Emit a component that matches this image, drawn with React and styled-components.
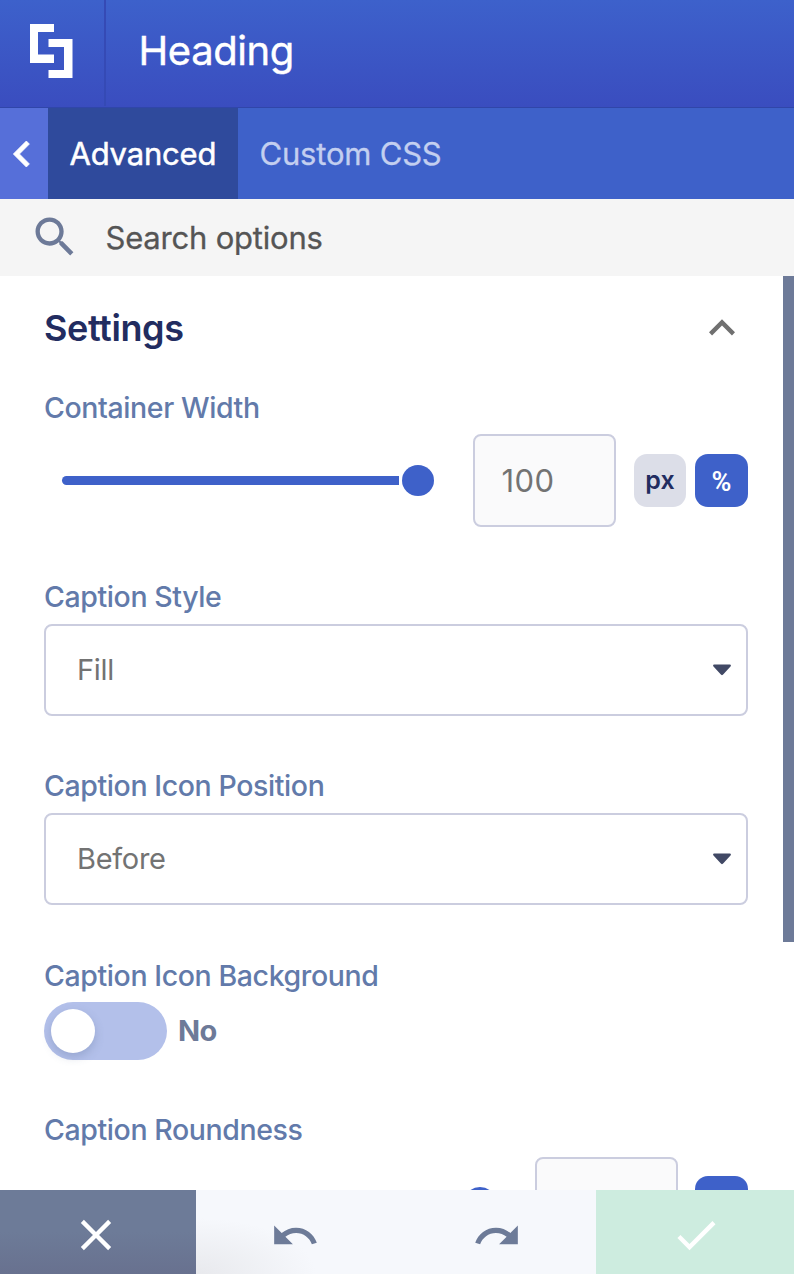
import React from "react";
import styled, { createGlobalStyle } from "styled-components";

const GlobalStyle = createGlobalStyle`
  * { box-sizing: border-box; }
  body { margin: 0; background: #fff; }
  button, input { font: inherit; letter-spacing: inherit; border: 0; padding: 0; margin: 0; }
`;

const Panel = styled.div`
  width: 794px;
  height: 1274px;
  display: flex;
  flex-direction: column;
  overflow: hidden;
  background: #fff;
  font-family: Inter, "Liberation Sans", sans-serif;
`;

const Header = styled.header`
  height: 108px;
  flex: none;
  display: flex;
  background: linear-gradient(#3d61cb, #3a4dbf);
  border-bottom: 1px solid #3046a9;
`;

const LogoCell = styled.div`
  width: 106px;
  height: 106px;
  padding: 24px 0 0 30px;
  border-right: 2px solid #354ab5;
`;

const Title = styled.h1`
  margin: 0;
  padding: 0 0 7px 32.500px;
  display: flex;
  align-items: center;
  color: #fff;
  font-size: 40px;
  font-weight: 400;
  letter-spacing: -0.4px;
  -webkit-text-stroke: 0.4px currentColor;
`;

const Tabs = styled.nav`
  height: 91px;
  flex: none;
  display: flex;
  background: #3e61c9;
`;

const BackButton = styled.button`
  width: 48px;
  display: flex;
  align-items: center;
  justify-content: center;
  padding: 0 5px 0 0;
  background: #566fd9;
  color: #fff;
`;

const Tab = styled.button`
  padding: 0 21.5px 1px;
  width: ${(p) => (p.$active ? "190px" : "auto")};
  text-align: left;
  background: ${(p) => (p.$active ? "#2f4a9c" : "transparent")};
  color: ${(p) => (p.$active ? "#fff" : "#c3cff0")};
  font-size: 31px;
  font-weight: 400;
  letter-spacing: -0.2px;
  -webkit-text-stroke: ${(p) => (p.$active ? "0.5px" : "0.3px")} currentColor;
  white-space: nowrap;
`;

const SearchBar = styled.div`
  height: 77px;
  flex: none;
  display: flex;
  align-items: center;
  gap: 24.5px;
  padding: 0 0 2px 29px;
  background: #f5f5f5;
  color: #6d7a98;
`;

const SearchInput = styled.input`
  flex: 1;
  padding-top: 2px;
  background: transparent;
  color: #555;
  font-size: 31px;
  font-weight: 400;
  letter-spacing: -0.2px;
  -webkit-text-stroke: 0.3px #555;
  &::placeholder { color: #555; opacity: 1; }
`;

const Body = styled.div`
  flex: 1;
  min-height: 0;
  display: flex;
  overflow: hidden;
`;

const Options = styled.main`
  flex: 1;
  padding: 0 35px 0 44px;
`;

const ScrollThumb = styled.div`
  width: 11px;
  height: 666px;
  background: #6d7a98;
`;

const SectionHeader = styled.div`
  height: 105px;
  padding-bottom: 1px;
  display: flex;
  justify-content: space-between;
  align-items: center;
  color: #707070;
`;

const SectionTitle = styled.h2`
  margin: 0;
  padding-bottom: 1px;
  color: #222c60;
  font-size: 36px;
  font-weight: 600;
  letter-spacing: -0.4px;
`;

const Field = styled.section`
  margin-bottom: 44px;
`;

const Label = styled.div`
  height: 53px;
  padding-top: ${(p) => (p.$low ? "1px" : "0")};
  line-height: 52px;
  color: #627aaa;
  font-size: 28.5px;
  font-weight: 500;
  letter-spacing: -0.4px;
  white-space: nowrap;
`;

const SliderRow = styled.div`
  height: 93px;
  display: flex;
  align-items: center;
`;

const Slider = styled.div`
  flex: 1;
  display: flex;
  align-items: center;
  margin: 0 39px ${(p) => (p.$single ? "2px" : "1px")} 18px;
`;

const Track = styled.div`
  flex: 1;
  height: 9px;
  border-radius: 5px 0 0 5px;
  background: #3e61c9;
`;

const Knob = styled.div`
  width: 32px;
  height: 31px;
  margin-left: 3px;
  border-radius: 50%;
  background: #3e61c9;
`;

const NumberInput = styled.input`
  width: 143px;
  height: 93px;
  margin-right: ${(p) => (p.$single ? "17px" : "18px")};
  padding-left: 26.5px;
  border: 2px solid #cbcddf;
  border-radius: 8px;
  background: #fafafb;
  color: #737373;
  font-size: 31px;
  letter-spacing: 0.4px;
`;

const Units = styled.div`
  display: flex;
  gap: 9px;
  margin-bottom: ${(p) => (p.$single ? "2px" : "0")};
`;

const Unit = styled.button`
  width: ${(p) => (p.$active ? "53px" : "52px")};
  height: 53px;
  padding: ${(p) => (p.$active ? "2px 0 0" : "0 0 1px")};
  border-radius: 13px;
  background: ${(p) => (p.$active ? "#3e61c9" : "#dcdee8")};
  color: ${(p) => (p.$active ? "#fff" : "#222c60")};
  font-family: ${(p) => (p.$active ? "Roboto, sans-serif" : "inherit")};
  font-size: ${(p) => (p.$active ? "27px" : "25px")};
  font-weight: 600;
`;

const Select = styled.div`
  height: 92px;
  display: flex;
  align-items: center;
  justify-content: space-between;
  padding: 0 0 1px 31px;
  border: 2px solid #cbcddf;
  border-radius: 8px;
  color: #737373;
  font-size: 29px;
  letter-spacing: -0.3px;
  svg { margin: 0 15px 0 0; }
`;

const ToggleRow = styled.div`
  display: flex;
  align-items: center;
  gap: 11px;
  color: #6d7a98;
  font-size: 29px;
  font-weight: 700;
  letter-spacing: -0.6px;
`;

const ToggleText = styled.span`
  padding-bottom: 2px;
`;

const Toggle = styled.div`
  width: 123px;
  height: 58px;
  padding: 7px;
  border-radius: 29px;
  background: #b3c0ea;
`;

const ToggleKnob = styled.div`
  width: 44px;
  height: 44px;
  border-radius: 50%;
  background: #fff;
  box-shadow: 0 4px 10px rgba(90, 110, 150, 0.3);
`;

const Footer = styled.footer`
  height: 84px;
  flex: none;
  display: grid;
  grid-template-columns: 196px 200px 200px 198px;
`;

const tones = {
  cancel: ["linear-gradient(#6d7b98 50%, #68718f)", "#fff", "5px 4px 0 0"],
  undo: ["radial-gradient(ellipse 120px 56px at 0 100%, #e8e9ed, #f6f8fc)", "#6d7b98", "7px 3px 0 0"],
  redo: ["#f6f8fc", "#6d7b98", "7px 0 0 2px"],
  save: ["#cdecdf", "#fff", "5px 0 0 1px"],
};

const Action = styled.button`
  display: flex;
  align-items: center;
  justify-content: center;
  padding: ${(p) => tones[p.$tone][2]};
  background: ${(p) => tones[p.$tone][0]};
  color: ${(p) => tones[p.$tone][1]};
`;

const paths = {
  search:
    "M15.5 14h-.79l-.28-.27C15.41 12.59 16 11.11 16 9.5 16 5.91 13.09 3 9.5 3S3 5.91 3 9.5 5.91 16 9.5 16c1.61 0 3.09-.59 4.23-1.57l.27.28v.79l5 4.99L20.49 19l-4.99-5zm-6 0C7.01 14 5 11.99 5 9.5S7.01 5 9.5 5 14 7.01 14 9.5 11.99 14 9.5 14z",
  left: "M15.41 16.59L10.83 12l4.58-4.59L14 6l-6 6 6 6 1.41-1.41z",
  up: "M7.41 15.41L12 10.83l4.59 4.58L18 14l-6-6-6 6z",
  close:
    "M19 6.41L17.59 5 12 10.59 6.41 5 5 6.41 10.59 12 5 17.59 6.41 19 12 13.41 17.59 19 19 17.59 13.41 12z",
  undo: "M12.5 8c-2.65 0-5.05.99-6.9 2.6L2 7v9h9l-3.62-3.62c1.39-1.16 3.16-1.88 5.12-1.88 3.54 0 6.55 2.31 7.6 5.5l2.37-.78C21.08 11.03 17.15 8 12.5 8z",
  redo: "M18.4 10.6C16.55 8.99 14.15 8 11.5 8c-4.65 0-8.58 3.03-9.96 7.22L3.9 16c1.05-3.19 4.05-5.5 7.6-5.5 1.95 0 3.73.72 5.12 1.88L13 16h9V7l-3.6 3.6z",
  check: "M9 16.17L4.83 12l-1.42 1.41L9 19 21 7l-1.41-1.41z",
};

const Glyph = styled.svg`
  flex: none;
  fill: currentColor;
  stroke: currentColor;
  stroke-linejoin: round;
`;

const Icon = ({ name, size = 52, weight = 0 }) => (
  <Glyph width={size} height={size} viewBox="0 0 24 24" strokeWidth={weight}>
    <path d={paths[name]} />
  </Glyph>
);

const Caret = () => (
  <svg width="18" height="12" viewBox="0 0 18 12" fill="#414965">
    <path d="M1.2 .5H16.8Q18.6 .9 17.5 2.6L10.6 10.1Q9 12.3 7.4 10.1L.5 2.6Q-.6 .9 1.2 .5Z" />
  </svg>
);

const Logo = () => (
  <svg width="43" height="54" viewBox="0 0 43 54" fill="#fff">
    <path d="M0 0H24V8H8V30.5H24V39H0Z" />
    <path d="M18.5 15H42.5V54H18.5V46H34V23H18.5Z" />
  </svg>
);

const SelectField = ({ label, value }) => (
  <Field>
    <Label>{label}</Label>
    <Select>
      {value}
      <Caret />
    </Select>
  </Field>
);

const SliderField = ({ label, value, units, active }) => {
  const single = units.length === 1;
  return (
    <Field>
      <Label $low={!single}>{label}</Label>
      <SliderRow>
        <Slider $single={single}>
          <Track />
          <Knob />
        </Slider>
        <NumberInput defaultValue={value} $single={single} />
        <Units $single={single}>
          {units.map((u) => (
            <Unit key={u} $active={u === active}>
              {u}
            </Unit>
          ))}
        </Units>
      </SliderRow>
    </Field>
  );
};

export default function App() {
  return (
    <Panel>
      <GlobalStyle />
      <Header>
        <LogoCell>
          <Logo />
        </LogoCell>
        <Title>Heading</Title>
      </Header>
      <Tabs>
        <BackButton aria-label="Back">
          <Icon name="left" weight={0.35} />
        </BackButton>
        <Tab $active>Advanced</Tab>
        <Tab>Custom CSS</Tab>
      </Tabs>
      <SearchBar>
        <Icon name="search" />
        <SearchInput placeholder="Search options" />
      </SearchBar>
      <Body>
        <Options>
          <SectionHeader>
            <SectionTitle>Settings</SectionTitle>
            <Icon name="up" />
          </SectionHeader>
          <SliderField label="Container Width" value="100" units={["px", "%"]} active="%" />
          <SelectField label="Caption Style" value="Fill" />
          <SelectField label="Caption Icon Position" value="Before" />
          <Field>
            <Label $low>Caption Icon Background</Label>
            <ToggleRow>
              <Toggle>
                <ToggleKnob />
              </Toggle>
              <ToggleText>No</ToggleText>
            </ToggleRow>
          </Field>
          <SliderField label="Caption Roundness" value="" units={[""]} active="" />
        </Options>
        <ScrollThumb />
      </Body>
      <Footer>
        <Action $tone="cancel" aria-label="Cancel">
          <Icon name="close" />
        </Action>
        <Action $tone="undo" aria-label="Undo">
          <Icon name="undo" size={50} />
        </Action>
        <Action $tone="redo" aria-label="Redo">
          <Icon name="redo" size={50} />
        </Action>
        <Action $tone="save" aria-label="Save">
          <Icon name="check" />
        </Action>
      </Footer>
    </Panel>
  );
}
